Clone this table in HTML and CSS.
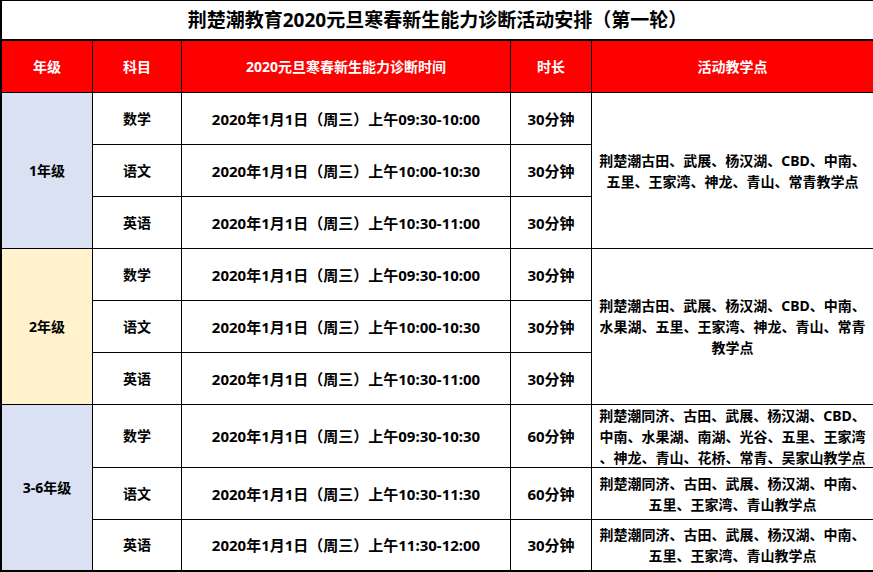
FILE: index.html
```html
<!DOCTYPE html>
<html lang="zh-CN">
<head>
<meta charset="utf-8">
<title>荆楚潮教育2020元旦寒春新生能力诊断活动安排（第一轮）</title>
<link rel="stylesheet" href="styles.css">
</head>
<body>
<div class="sheet">
  <div class="cell title">荆楚潮教育2020元旦寒春新生能力诊断活动安排（第一轮）</div>

  <div class="cell head">年级</div>
  <div class="cell head">科目</div>
  <div class="cell head">2020元旦寒春新生能力诊断时间</div>
  <div class="cell head">时长</div>
  <div class="cell head last">活动教学点</div>

  <div class="cell grade blue span3">1年级</div>
  <div class="cell">数学</div>
  <div class="cell time">2020年1月1日（周三）上午09:30-10:00</div>
  <div class="cell time">30分钟</div>
  <div class="cell place last span3">荆楚潮古田、武展、杨汉湖、CBD、中南、<br>五里、王家湾、神龙、青山、常青教学点</div>
  <div class="cell">语文</div>
  <div class="cell time">2020年1月1日（周三）上午10:00-10:30</div>
  <div class="cell time">30分钟</div>
  <div class="cell">英语</div>
  <div class="cell time">2020年1月1日（周三）上午10:30-11:00</div>
  <div class="cell time">30分钟</div>

  <div class="cell grade yellow span3">2年级</div>
  <div class="cell">数学</div>
  <div class="cell time">2020年1月1日（周三）上午09:30-10:00</div>
  <div class="cell time">30分钟</div>
  <div class="cell place last span3">荆楚潮古田、武展、杨汉湖、CBD、中南、<br>水果湖、五里、王家湾、神龙、青山、常青<br>教学点</div>
  <div class="cell">语文</div>
  <div class="cell time">2020年1月1日（周三）上午10:00-10:30</div>
  <div class="cell time">30分钟</div>
  <div class="cell">英语</div>
  <div class="cell time">2020年1月1日（周三）上午10:30-11:00</div>
  <div class="cell time">30分钟</div>

  <div class="cell grade blue span3 bottom">3-6年级</div>
  <div class="cell">数学</div>
  <div class="cell time">2020年1月1日（周三）上午09:30-10:30</div>
  <div class="cell time">60分钟</div>
  <div class="cell place last">荆楚潮同济、古田、武展、杨汉湖、CBD、<br>中南、水果湖、南湖、光谷、五里、王家湾<br>、神龙、青山、花桥、常青、吴家山教学点</div>
  <div class="cell">语文</div>
  <div class="cell time">2020年1月1日（周三）上午10:30-11:30</div>
  <div class="cell time">60分钟</div>
  <div class="cell place last">荆楚潮同济、古田、武展、杨汉湖、中南、<br>五里、王家湾、青山教学点</div>
  <div class="cell bottom">英语</div>
  <div class="cell time bottom">2020年1月1日（周三）上午11:30-12:00</div>
  <div class="cell time bottom">30分钟</div>
  <div class="cell place last bottom">荆楚潮同济、古田、武展、杨汉湖、中南、<br>五里、王家湾、青山教学点</div>
</div>
</body>
</html>
```

FILE: styles.css
```css
html, body {
  margin: 0;
  padding: 0;
  background: #ffffff;
}

.sheet {
  box-sizing: border-box;
  width: 873px;
  height: 572px;
  display: grid;
  grid-template-columns: 91px 89px 329px 81px 283px;
  grid-template-rows: 40px 52px 52px 52px 52px 52px 52px 52px 63px 52px 52px;
  border-left: 2px solid #000;
  border-top: 1px solid #000;
  font-family: "Noto Sans", "Noto Sans CJK SC", sans-serif;
  font-weight: 700;
  font-size: 14px;
  color: #000;
}

.cell {
  box-sizing: border-box;
  display: flex;
  align-items: center;
  justify-content: center;
  text-align: center;
  white-space: nowrap;
  border-right: 1px solid #000;
  border-bottom: 1px solid #000;
  line-height: 20px;
}

.title {
  grid-column: 1 / span 5;
  font-size: 19px;
  border-right: 2px solid #000;
  border-bottom: 2px solid #000;
}

.head {
  background: #ff0000;
  color: #ffffff;
}

.time {
  font-size: 15px;
}

.last {
  border-right: 2px solid #000;
}

.bottom {
  border-bottom: 2px solid #000;
}

.span3 {
  grid-row: span 3;
}

.blue {
  background: #d9e1f2;
}

.yellow {
  background: #fff2cc;
}

.place {
  line-height: 21px;
}
```
